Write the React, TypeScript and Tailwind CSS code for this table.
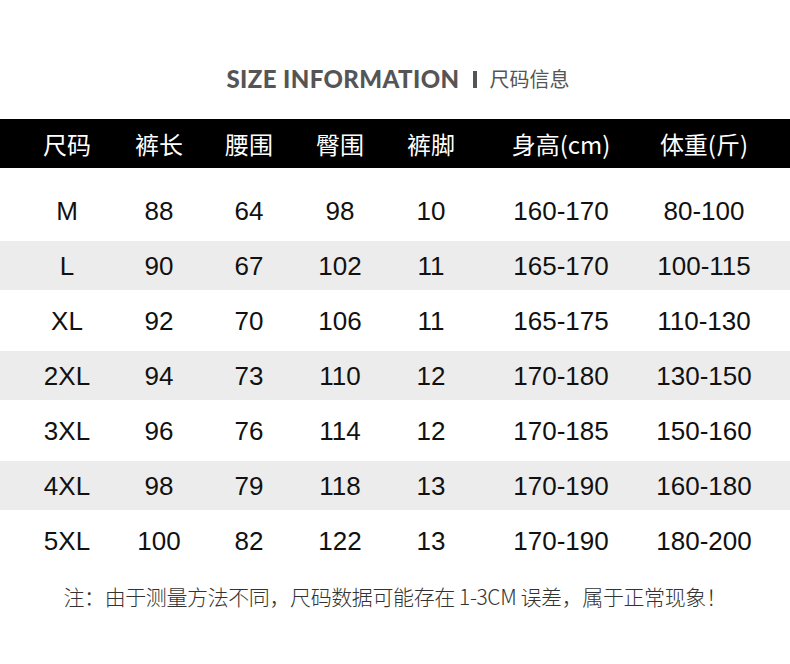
import React from 'react';

const headers = ['尺码', '裤长', '腰围', '臀围', '裤脚', '身高(cm)', '体重(斤)'];

const rows = [
  ['M', '88', '64', '98', '10', '160-170', '80-100'],
  ['L', '90', '67', '102', '11', '165-170', '100-115'],
  ['XL', '92', '70', '106', '11', '165-175', '110-130'],
  ['2XL', '94', '73', '110', '12', '170-180', '130-150'],
  ['3XL', '96', '76', '114', '12', '170-185', '150-160'],
  ['4XL', '98', '79', '118', '13', '170-190', '160-180'],
  ['5XL', '100', '82', '122', '13', '170-190', '180-200'],
];

const cols = 'grid grid-cols-[92px_92px_88px_94px_88px_172px_114px] pl-[21px]';

export default function App() {
  return (
    <div className="w-[790px] h-[664px] bg-white overflow-hidden">
      {/* Title */}
      <div className="h-[119px] pt-[63px] flex items-start justify-center">
        <div className="flex items-center text-[#555] ml-[6px]">
          <span className="font-['Lato','Liberation_Sans',sans-serif] font-black text-[24px] leading-[32px] tracking-[0.4px]">
            SIZE INFORMATION
          </span>
          <span className="w-[4px] h-[17px] bg-[#555] ml-[13px] mr-[13px]" />
          <span className="font-['Noto_Sans_CJK_SC',sans-serif] text-[20px] leading-[32px]">尺码信息</span>
        </div>
      </div>

      {/* Header bar */}
      <div className={`${cols} h-[49px] bg-black items-center`}>
        {headers.map((h) => (
          <div
            key={h}
            className="text-center text-white text-[24px] leading-none font-['Noto_Sans_CJK_SC','Liberation_Sans',sans-serif]"
          >
            {h}
          </div>
        ))}
      </div>

      {/* Body */}
      <div className="pt-[15px]">
        {rows.map((r, i) => (
          <div key={r[0]} className="h-[55px] py-[3px]">
            <div className={`${cols} h-[49px] items-center ${i % 2 === 1 ? 'bg-[#ececec]' : ''}`}>
              {r.map((c, j) => (
                <div
                  key={j}
                  className="text-center text-[#111] text-[26px] leading-none font-['Liberation_Sans',Arial,sans-serif]"
                >
                  {c}
                </div>
              ))}
            </div>
          </div>
        ))}
      </div>

      {/* Note */}
      <div className="mt-[18px] text-center text-[#333] text-[21px] font-light leading-none font-['Noto_Sans_CJK_SC',sans-serif] tracking-[-0.4px]">
        注：由于测量方法不同，尺码数据可能存在 1-3CM 误差，属于正常现象！
      </div>
    </div>
  );
}
